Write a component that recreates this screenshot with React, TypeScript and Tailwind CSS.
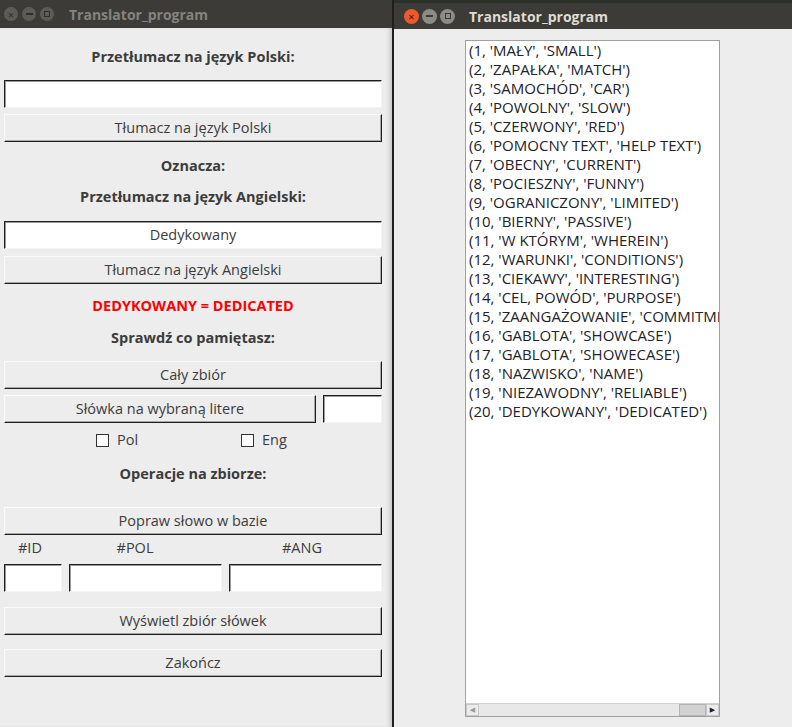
import React from 'react';

const words: [number, string, string][] = [
  [1, 'MAŁY', 'SMALL'],
  [2, 'ZAPAŁKA', 'MATCH'],
  [3, 'SAMOCHÓD', 'CAR'],
  [4, 'POWOLNY', 'SLOW'],
  [5, 'CZERWONY', 'RED'],
  [6, 'POMOCNY TEXT', 'HELP TEXT'],
  [7, 'OBECNY', 'CURRENT'],
  [8, 'POCIESZNY', 'FUNNY'],
  [9, 'OGRANICZONY', 'LIMITED'],
  [10, 'BIERNY', 'PASSIVE'],
  [11, 'W KTÓRYM', 'WHEREIN'],
  [12, 'WARUNKI', 'CONDITIONS'],
  [13, 'CIEKAWY', 'INTERESTING'],
  [14, 'CEL, POWÓD', 'PURPOSE'],
  [15, 'ZAANGAŻOWANIE', 'COMMITMENT'],
  [16, 'GABLOTA', 'SHOWCASE'],
  [17, 'GABLOTA', 'SHOWECASE'],
  [18, 'NAZWISKO', 'NAME'],
  [19, 'NIEZAWODNY', 'RELIABLE'],
  [20, 'DEDYKOWANY', 'DEDICATED'],
];

const btn =
  'h-[28px] flex items-center justify-center bg-[#ededed] border border-t-[#fafafa] border-l-[#fafafa] border-b-[#1e1e1e] border-r-[#1e1e1e] shadow-[inset_-1px_-1px_0_#a8a8a8] text-[14.5px] text-[#3c3c3c]';
const entry =
  'h-[28px] bg-white border border-t-[#1e1e1e] border-l-[#1e1e1e] border-b-[#f4f4f4] border-r-[#f4f4f4] shadow-[inset_1px_1px_0_#9a9a9a]';
const heading = 'h-5 flex items-center justify-center text-[14.5px] font-bold text-[#3c3c3c]';

function Controls({ active }: { active: boolean }) {
  const size = active ? 'w-[15px] h-[15px]' : 'w-[14px] h-[14px]';
  return (
    <div className={`flex items-center ${active ? 'gap-[3px]' : 'gap-[4px]'}`}>
      <div
        className={`${size} rounded-full flex items-center justify-center text-[11px] leading-none ${
          active ? 'bg-[#ea5a2e] text-[#4a1406]' : 'bg-[#5c5b57] text-[#2f2e2b]'
        }`}
      >
        ×
      </div>
      <div
        className={`${size} rounded-full flex items-center justify-center ${
          active ? 'bg-[#8d8b85]' : 'bg-[#5c5b57]'
        }`}
      >
        <div className={`w-[7px] h-[1.5px] ${active ? 'bg-[#3a3935]' : 'bg-[#2f2e2b]'}`} />
      </div>
      <div
        className={`${size} rounded-full flex items-center justify-center ${
          active ? 'bg-[#8d8b85]' : 'bg-[#5c5b57]'
        }`}
      >
        <div className={`w-[6px] h-[6px] border ${active ? 'border-[#3a3935]' : 'border-[#2f2e2b]'}`} />
      </div>
    </div>
  );
}

function Checkbox({ label }: { label: string }) {
  return (
    <div className="flex items-center gap-[8px]">
      <div className="w-[13px] h-[13px] bg-white border border-[#333]" />
      <span className="text-[14.5px] text-[#3c3c3c]">{label}</span>
    </div>
  );
}

export default function App() {
  return (
    <div
      className="w-[792px] h-[727px] flex bg-[#2e2d2a] overflow-hidden"
      style={{ fontFamily: '"Open Sans", "DejaVu Sans", sans-serif' }}
    >
      {/* left window */}
      <div className="w-[392px] flex flex-col shrink-0">
        <div className="h-[28px] bg-[#3c3b37] flex items-center pl-[4px]">
          <Controls active={false} />
          <span className="ml-[15px] text-[14px] font-bold text-[#858380]">Translator_program</span>
        </div>
        <div className="flex-1 bg-[#ededed] flex flex-col pl-[4px] pr-[10px] shadow-[inset_-4px_0_4px_-2px_#c4c4c4]">
          <div className={`${heading} mt-[19px]`}>Przetłumacz na język Polski:</div>
          <div className={`${entry} mt-[13px]`} />
          <div className={`${btn} mt-[6px]`}>Tłumacz na język Polski</div>
          <div className={`${heading} mt-[14px]`}>Oznacza:</div>
          <div className={`${heading} mt-[11px]`}>Przetłumacz na język Angielski:</div>
          <div className={`${entry} mt-[14px] flex items-center justify-center text-[14.5px] text-[#3c3c3c]`}>
            Dedykowany
          </div>
          <div className={`${btn} mt-[7px]`}>Tłumacz na język Angielski</div>
          <div className="h-5 mt-[12px] flex items-center justify-center text-[14.5px] font-bold text-[#ff0000]">
            DEDYKOWANY = DEDICATED
          </div>
          <div className={`${heading} mt-[12px]`}>Sprawdź co pamiętasz:</div>
          <div className={`${btn} mt-[13px]`}>Cały zbiór</div>
          <div className="flex mt-[6px] gap-[7px]">
            <div className={`${btn} w-[312px]`}>Słówka na wybraną litere</div>
            <div className={`${entry} flex-1`} />
          </div>
          <div className="h-5 mt-[7px] flex items-center">
            <div className="ml-[92px] w-[145px]">
              <Checkbox label="Pol" />
            </div>
            <div>
              <Checkbox label="Eng" />
            </div>
          </div>
          <div className={`${heading} mt-[14px]`}>Operacje na zbiorze:</div>
          <div className={`${btn} mt-[23px]`}>Popraw słowo w bazie</div>
          <div className="flex h-5 mt-[3px] items-center text-[14.5px] text-[#3c3c3c]">
            <div className="w-[58px] pl-[14px]">#ID</div>
            <div className="w-[160px] text-center pr-[14px]">#POL</div>
            <div className="flex-1 text-center">#ANG</div>
          </div>
          <div className="flex mt-[6px] gap-[7px]">
            <div className={`${entry} w-[58px]`} />
            <div className={`${entry} w-[153px]`} />
            <div className={`${entry} flex-1`} />
          </div>
          <div className={`${btn} mt-[15px]`}>Wyświetl zbiór słówek</div>
          <div className={`${btn} mt-[14px]`}>Zakończ</div>
        </div>
      </div>

      {/* right window */}
      <div className="flex-1 flex flex-col border-l-2 border-[#1f1f1d]">
        <div className="h-[3px] bg-[#2a3129]" />
        <div className="h-[26px] bg-[#3c3b37] flex items-center pl-[10px]">
          <Controls active={true} />
          <span className="ml-[14px] text-[14px] font-bold text-[#dfdbd2]">Translator_program</span>
        </div>
        <div className="flex-1 bg-[#ededed] pt-[11px] pl-[71px] pb-[10px]">
          <div className="w-[255px] h-full bg-white border border-[#a0a0a0] flex flex-col">
            <div className="flex-1 overflow-hidden pl-[3px]">
              {words.map(([id, pl, en]) => (
                <div key={id} className="h-[19px] flex items-center whitespace-nowrap text-[15px] text-[#22222a]">
                  ({id}, '{pl}', '{en}')
                </div>
              ))}
            </div>
            <div className="h-[13px] flex bg-[#e8e8e8] border-t border-[#d0d0d0]">
              <div className="w-[13px] flex items-center justify-center bg-[#ececec] border border-[#c8c8c8] text-[7px] text-[#999]">
                ◀
              </div>
              <div className="flex-1 flex justify-end">
                <div className="w-[27px] bg-[#d2d2d2] border border-[#b4b4b4]" />
              </div>
              <div className="w-[13px] flex items-center justify-center bg-[#ececec] border border-[#c8c8c8] text-[7px] text-[#222]">
                ▶
              </div>
            </div>
          </div>
        </div>
      </div>
    </div>
  );
}
